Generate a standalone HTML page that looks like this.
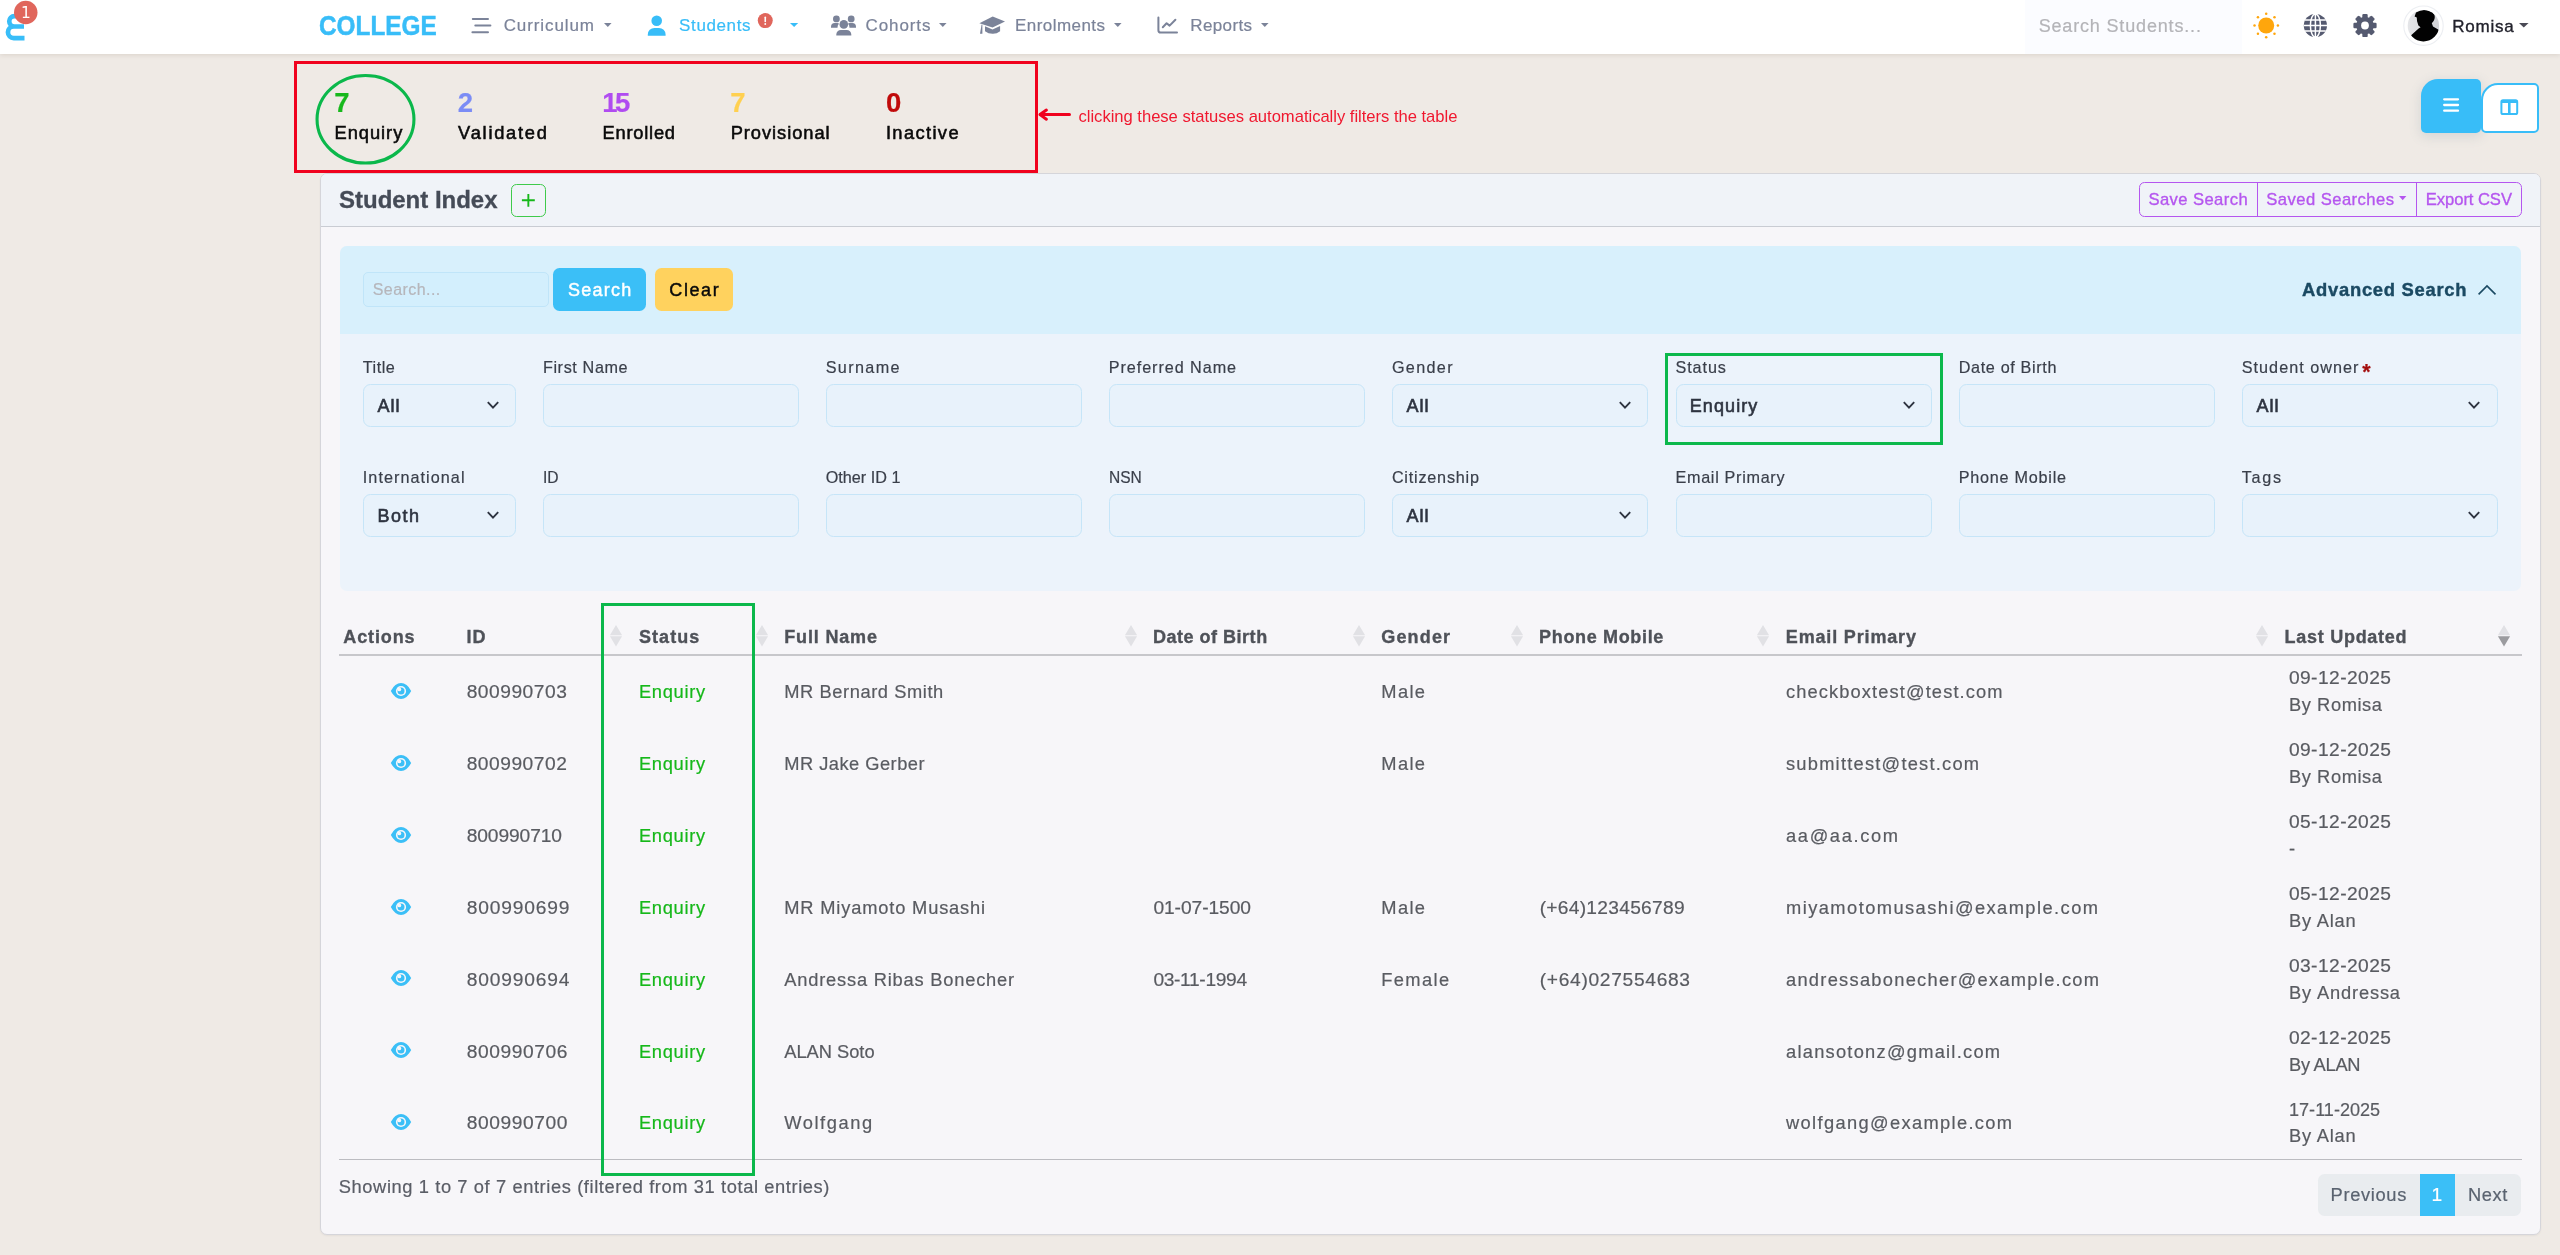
<!DOCTYPE html>
<html lang="en"><head><meta charset="utf-8"><title>Student Index</title>
<style>
html,body{margin:0;padding:0}
body{width:2560px;height:1255px;overflow:hidden;background:#efeae5;font-family:"Liberation Sans", sans-serif;position:relative}
#r{position:absolute;left:0;top:0;width:2560px;height:1255px;overflow:hidden;will-change:transform}
#r div,#r span,#r svg{position:absolute;box-sizing:border-box}
#r span{white-space:pre;display:block}
</style></head>
<body><div id="r">
<div style="left:0px;top:0px;width:2560px;height:54px;background:#fff;box-shadow:0 1px 5px rgba(110,90,70,.17)"></div>
<div style="left:2025px;top:0px;width:216.5px;height:54px;background:#fbfcff"></div>
<svg style="left:0px;top:0px" width="60" height="54" viewBox="0 0 60 54" ><path d="M21 16.1H14.45A5.2 5.2 0 0 0 14.45 26.5H24M14.45 26.5H13.75A5.8 5.8 0 0 0 13.75 38.1H24.5" fill="none" stroke="#38bdf8" stroke-width="4.7"/><circle cx="25.75" cy="12.5" r="11.75" fill="#e0665c"/><text x="25.9" y="18.1" font-family="DejaVu Sans, sans-serif" font-size="15.4" fill="#fff" text-anchor="middle">1</text></svg>
<svg style="left:465px;top:10px" width="34" height="34" viewBox="465 10 34 34" ><g stroke="#7b8399" stroke-width="2" stroke-linecap="round"><path d="M472.8 19H488M475.3 25.5H490.4M472.4 32.3H488"/></g></svg>
<svg style="left:602.75px;top:22px" width="9.6" height="6.1" viewBox="602.75 22 9.6 6.1" ><path d="M603.75 23h7.6l-3.8 4.1z" fill="#7b8399"/></svg>
<svg style="left:645px;top:12px" width="24" height="28" viewBox="645 12 24 28" ><g fill="#38bdf8"><circle cx="656.7" cy="20.7" r="5.3"/><path d="M647.8 35.7v-1.2a6.6 6.6 0 0 1 6.6-6.6h4.6a6.6 6.6 0 0 1 6.6 6.6v1.2z"/></g></svg>
<svg style="left:755px;top:10px" width="22" height="22" viewBox="755 10 22 22" ><circle cx="765.25" cy="20.6" r="7.5" fill="#e0665c"/><path d="M765.25 17.3v4.2" stroke="#fff" stroke-width="1.6" stroke-linecap="round"/><circle cx="765.25" cy="24" r="0.95" fill="#fff"/></svg>
<svg style="left:788.6px;top:22px" width="10.2" height="6.1" viewBox="788.6 22 10.2 6.1" ><path d="M789.6 23h8.2l-4.1 4.1z" fill="#38bdf8"/></svg>
<svg style="left:828px;top:12px" width="32" height="28" viewBox="828 12 32 28" ><g fill="#7b8399"><circle cx="836.4" cy="18.9" r="3.4"/><circle cx="851.2" cy="18.9" r="3.4"/><circle cx="843.8" cy="24.4" r="4.3"/><path d="M831 27.8v-1a3.8 3.8 0 0 1 3.8-3.8h2.6q1 0 1.6.6a6 6 0 0 0-1.5 4.2z"/><path d="M856 27.8v-1a3.8 3.8 0 0 0-3.8-3.8h-2.6q-1 0-1.6.6a6 6 0 0 1 1.5 4.2z"/><path d="M836.3 35.6v-1a4.6 4.6 0 0 1 4.6-4.6h5.8a4.6 4.6 0 0 1 4.6 4.6v1z"/></g></svg>
<svg style="left:937.6px;top:22px" width="9.6" height="6.1" viewBox="937.6 22 9.6 6.1" ><path d="M938.6 23h7.6l-3.8 4.1z" fill="#7b8399"/></svg>
<svg style="left:976px;top:12px" width="34" height="28" viewBox="976 12 34 28" ><g fill="#7b8399"><path d="M979.4 23.2L992.7 16.6L1005 21.6L992.5 27.4z"/><path d="M985 26.2l7.5 3.2l7.6-3.4v5.2q-3.5 2.8-7.6 2.6q-4.2 0-7.5-2.6z"/><path d="M981.6 24.4L980 33.8h2.4L982.4 24.8z"/></g></svg>
<svg style="left:1113px;top:22px" width="9.6" height="6.1" viewBox="1113 22 9.6 6.1" ><path d="M1114 23h7.6l-3.8 4.1z" fill="#7b8399"/></svg>
<svg style="left:1154px;top:12px" width="28" height="26" viewBox="1154 12 28 26" ><g fill="none" stroke="#7b8399" stroke-width="2" stroke-linecap="round" stroke-linejoin="round"><path d="M1158.4 17.6V30.2q0 2.4 2.4 2.4H1177"/><path d="M1162.8 27.2L1166.6 23.2L1169.6 25.6L1175.4 19.8"/></g></svg>
<svg style="left:1259.7px;top:22px" width="9.6" height="6.1" viewBox="1259.7 22 9.6 6.1" ><path d="M1260.7 23h7.6l-3.8 4.1z" fill="#7b8399"/></svg>
<svg style="left:2250px;top:9px" width="33" height="33" viewBox="2250 9 33 33" ><g fill="#ffa60c"><circle cx="2266.2" cy="25.5" r="8"/><circle cx="2277.90" cy="25.50" r="1.25"/><circle cx="2274.47" cy="33.77" r="1.25"/><circle cx="2266.20" cy="37.20" r="1.25"/><circle cx="2257.93" cy="33.77" r="1.25"/><circle cx="2254.50" cy="25.50" r="1.25"/><circle cx="2257.93" cy="17.23" r="1.25"/><circle cx="2266.20" cy="13.80" r="1.25"/><circle cx="2274.47" cy="17.23" r="1.25"/></g></svg>
<svg style="left:2300px;top:10px" width="31" height="31" viewBox="2300 10 31 31" ><circle cx="2315.4" cy="25.5" r="11.6" fill="#555a70"/><g fill="none" stroke="#fff" stroke-width="1.5"><ellipse cx="2315.4" cy="25.5" rx="5" ry="11.6"/><path d="M2315.4 13.9v23.2M2303.8 25.5h23.2M2305 20h20.8M2305 31h20.8"/></g></svg>
<svg style="left:2350px;top:10px" width="31" height="31" viewBox="2350 10 31 31" ><g fill="#555a70"><rect x="2362.3" y="13.9" width="5.4" height="23.2" rx="1.2" transform="rotate(0 2365 25.5)"/><rect x="2362.3" y="13.9" width="5.4" height="23.2" rx="1.2" transform="rotate(45 2365 25.5)"/><rect x="2362.3" y="13.9" width="5.4" height="23.2" rx="1.2" transform="rotate(90 2365 25.5)"/><rect x="2362.3" y="13.9" width="5.4" height="23.2" rx="1.2" transform="rotate(135 2365 25.5)"/><circle cx="2365" cy="25.5" r="8.8"/></g><circle cx="2365" cy="25.5" r="3.9" fill="#fff"/></svg>
<svg style="left:2400px;top:3px" width="46" height="46" viewBox="2400 3 46 46" ><circle cx="2423.5" cy="25.7" r="19.7" fill="#fff" stroke="#eceef2" stroke-width="1.1"/><clipPath id="av"><circle cx="2423.4" cy="25.7" r="15.7"/></clipPath><linearGradient id="avg" x1="0" x2="1" y1="0" y2="0"><stop offset="0" stop-color="#e6e7ea"/><stop offset="1" stop-color="#cfd0d3"/></linearGradient><g clip-path="url(#av)"><rect x="2405" y="8" width="38" height="36" fill="url(#avg)"/><path d="M2416 12.6Q2424 7.6 2432.6 12.4Q2436.4 16 2433.6 21L2431.8 23.2L2433 26.4L2438.6 29.8L2441 44H2407L2411.4 35L2418.6 28.6L2420.6 27.2L2418.4 25.4L2417 21L2416.8 17.4L2414.6 16.4Z" fill="#020202"/></g></svg>
<svg style="left:2518.2px;top:22.2px" width="11.6" height="6.6" viewBox="2518.2 22.2 11.6 6.6" ><path d="M2519.2 23.2h9.6l-4.8 4.6z" fill="#4a4a55"/></svg>
<div style="left:2420.8px;top:78.8px;width:60.4px;height:54px;background:#38bdf8;border-radius:17px 5px 5px 5px;box-shadow:0 3px 12px 1px rgba(80,110,130,.15)"></div>
<div style="left:2481px;top:83.1px;width:57.8px;height:49.6px;background:#fff;border:2.2px solid #38bdf8;border-radius:17px 5px 5px 5px"></div>
<svg style="left:2440px;top:95px" width="22" height="20" viewBox="2440 95 22 20" ><path d="M2444.2 99.3H2458M2444.2 105H2458M2444.2 110.7H2458" stroke="#fff" stroke-width="2.3" stroke-linecap="round"/></svg>
<svg style="left:2498px;top:97px" width="23" height="21" viewBox="2498 97 23 21" ><rect x="2501.4" y="100.3" width="15.8" height="13.8" rx="1.6" fill="none" stroke="#38bdf8" stroke-width="2"/><path d="M2501.4 101.6h15.8M2509.3 101v13" stroke="#38bdf8" stroke-width="2.6"/></svg>
<div style="left:319.9px;top:172.6px;width:2221px;height:1062.6px;background:#f7f6f9;border:1px solid #d5d5da;border-radius:7px;box-shadow:0 1px 2px rgba(0,0,0,.05)"></div>
<div style="left:320.9px;top:173.6px;width:2219px;height:53.4px;background:#f0f3f8;border-bottom:1px solid #c9ccd3;border-radius:6px 6px 0 0"></div>
<div style="left:511px;top:184px;width:35px;height:33.3px;border:1.4px solid #3fca4b;border-radius:5.5px"></div>
<svg style="left:518px;top:190px" width="22" height="22" viewBox="518 190 22 22" ><path d="M521.9 200.3H534.8M528.35 193.9V206.7" stroke="#16b81a" stroke-width="1.9"/></svg>
<div style="left:2139px;top:181.8px;width:383.2px;height:34.9px;border:1.1px solid #b556ef;border-radius:5.5px"></div>
<div style="left:2256.7px;top:181.8px;width:1.2px;height:34.9px;background:#b556ef"></div>
<div style="left:2416px;top:181.8px;width:1.2px;height:34.9px;background:#b556ef"></div>
<svg style="left:2398.3px;top:195px" width="9.4" height="6.2" viewBox="2398.3 195 9.4 6.2" ><path d="M2399.3 196h7.4l-3.7 4.2z" fill="#b556ef"/></svg>
<div style="left:340px;top:245.5px;width:2181px;height:345px;background:#ecf3fb;border-radius:7px;overflow:hidden"><div style="left:0;top:0;width:2181px;height:88px;background:#d8f0fc"></div></div>
<div style="left:363px;top:272.3px;width:185.8px;height:34.4px;background:#d3effd;border:1px solid #c0e5f9;border-radius:5px"></div>
<div style="left:553.4px;top:268.4px;width:92.6px;height:42.4px;background:#3bbff7;border-radius:6.5px"></div>
<div style="left:655.2px;top:268.4px;width:77.8px;height:42.4px;background:#ffd25e;border-radius:6.5px"></div>
<svg style="left:2475px;top:282px" width="24" height="16" viewBox="2475 282 24 16" ><path d="M2478.6 294.4L2487 285.9L2495.5 294.4" fill="none" stroke="#1b4a63" stroke-width="1.6"/></svg>
<div style="left:363px;top:384px;width:153.2px;height:42.6px;background:#e8f2fb;border:1.2px solid #c6e5f8;border-radius:7.5px"></div>
<svg style="left:483.80000000000007px;top:398.3px" width="18" height="14" viewBox="483.80000000000007 398.3 18 14" ><path d="M487.6000000000001 402.5L492.80000000000007 407.90000000000003L498.00000000000006 402.5" fill="none" stroke="#2e3440" stroke-width="1.9"/></svg>
<div style="left:543.1px;top:384px;width:256.3px;height:42.6px;background:#e8f2fb;border:1.2px solid #c6e5f8;border-radius:7.5px"></div>
<div style="left:826px;top:384px;width:256px;height:42.6px;background:#e8f2fb;border:1.2px solid #c6e5f8;border-radius:7.5px"></div>
<div style="left:1109px;top:384px;width:256px;height:42.6px;background:#e8f2fb;border:1.2px solid #c6e5f8;border-radius:7.5px"></div>
<div style="left:1392px;top:384px;width:256px;height:42.6px;background:#e8f2fb;border:1.2px solid #c6e5f8;border-radius:7.5px"></div>
<svg style="left:1615.6px;top:398.3px" width="18" height="14" viewBox="1615.6 398.3 18 14" ><path d="M1619.3999999999999 402.5L1624.6 407.90000000000003L1629.8 402.5" fill="none" stroke="#2e3440" stroke-width="1.9"/></svg>
<div style="left:1675.5px;top:384px;width:256.5px;height:42.6px;background:#e8f2fb;border:1.2px solid #c6e5f8;border-radius:7.5px"></div>
<svg style="left:1899.6px;top:398.3px" width="18" height="14" viewBox="1899.6 398.3 18 14" ><path d="M1903.3999999999999 402.5L1908.6 407.90000000000003L1913.8 402.5" fill="none" stroke="#2e3440" stroke-width="1.9"/></svg>
<div style="left:1959px;top:384px;width:255.5px;height:42.6px;background:#e8f2fb;border:1.2px solid #c6e5f8;border-radius:7.5px"></div>
<div style="left:2242px;top:384px;width:255.5px;height:42.6px;background:#e8f2fb;border:1.2px solid #c6e5f8;border-radius:7.5px"></div>
<svg style="left:2465.1px;top:398.3px" width="18" height="14" viewBox="2465.1 398.3 18 14" ><path d="M2468.9 402.5L2474.1 407.90000000000003L2479.2999999999997 402.5" fill="none" stroke="#2e3440" stroke-width="1.9"/></svg>
<div style="left:363px;top:494px;width:153.2px;height:42.6px;background:#e8f2fb;border:1.2px solid #c6e5f8;border-radius:7.5px"></div>
<svg style="left:483.80000000000007px;top:508.29999999999995px" width="18" height="14" viewBox="483.80000000000007 508.29999999999995 18 14" ><path d="M487.6000000000001 512.5L492.80000000000007 517.9L498.00000000000006 512.5" fill="none" stroke="#2e3440" stroke-width="1.9"/></svg>
<div style="left:543.1px;top:494px;width:256.3px;height:42.6px;background:#e8f2fb;border:1.2px solid #c6e5f8;border-radius:7.5px"></div>
<div style="left:826px;top:494px;width:256px;height:42.6px;background:#e8f2fb;border:1.2px solid #c6e5f8;border-radius:7.5px"></div>
<div style="left:1109px;top:494px;width:256px;height:42.6px;background:#e8f2fb;border:1.2px solid #c6e5f8;border-radius:7.5px"></div>
<div style="left:1392px;top:494px;width:256px;height:42.6px;background:#e8f2fb;border:1.2px solid #c6e5f8;border-radius:7.5px"></div>
<svg style="left:1615.6px;top:508.29999999999995px" width="18" height="14" viewBox="1615.6 508.29999999999995 18 14" ><path d="M1619.3999999999999 512.5L1624.6 517.9L1629.8 512.5" fill="none" stroke="#2e3440" stroke-width="1.9"/></svg>
<div style="left:1675.5px;top:494px;width:256.5px;height:42.6px;background:#e8f2fb;border:1.2px solid #c6e5f8;border-radius:7.5px"></div>
<div style="left:1959px;top:494px;width:255.5px;height:42.6px;background:#e8f2fb;border:1.2px solid #c6e5f8;border-radius:7.5px"></div>
<div style="left:2242px;top:494px;width:255.5px;height:42.6px;background:#e8f2fb;border:1.2px solid #c6e5f8;border-radius:7.5px"></div>
<svg style="left:2465.1px;top:508.29999999999995px" width="18" height="14" viewBox="2465.1 508.29999999999995 18 14" ><path d="M2468.9 512.5L2474.1 517.9L2479.2999999999997 512.5" fill="none" stroke="#2e3440" stroke-width="1.9"/></svg>
<div style="left:339.2px;top:654.1px;width:2182.8px;height:1.5px;background:#c7c7cb"></div>
<div style="left:339.2px;top:1158.6px;width:2182.8px;height:1.1px;background:#bcbcc1"></div>
<svg style="left:608.4px;top:623px" width="16" height="26" viewBox="608.4 623 16 26" ><path d="M616.4 625L622.5 635.2H610.3z" fill="#e1e1e5"/><path d="M610.3 636.2H622.5L616.4 646.5z" fill="#e1e1e5"/></svg>
<svg style="left:753.8px;top:623px" width="16" height="26" viewBox="753.8 623 16 26" ><path d="M761.8 625L767.9 635.2H755.6999999999999z" fill="#e1e1e5"/><path d="M755.6999999999999 636.2H767.9L761.8 646.5z" fill="#e1e1e5"/></svg>
<svg style="left:1122.5px;top:623px" width="16" height="26" viewBox="1122.5 623 16 26" ><path d="M1130.5 625L1136.6 635.2H1124.4z" fill="#e1e1e5"/><path d="M1124.4 636.2H1136.6L1130.5 646.5z" fill="#e1e1e5"/></svg>
<svg style="left:1351px;top:623px" width="16" height="26" viewBox="1351 623 16 26" ><path d="M1359 625L1365.1 635.2H1352.9z" fill="#e1e1e5"/><path d="M1352.9 636.2H1365.1L1359 646.5z" fill="#e1e1e5"/></svg>
<svg style="left:1508.7px;top:623px" width="16" height="26" viewBox="1508.7 623 16 26" ><path d="M1516.7 625L1522.8 635.2H1510.6000000000001z" fill="#e1e1e5"/><path d="M1510.6000000000001 636.2H1522.8L1516.7 646.5z" fill="#e1e1e5"/></svg>
<svg style="left:1755.2px;top:623px" width="16" height="26" viewBox="1755.2 623 16 26" ><path d="M1763.2 625L1769.3 635.2H1757.1000000000001z" fill="#e1e1e5"/><path d="M1757.1000000000001 636.2H1769.3L1763.2 646.5z" fill="#e1e1e5"/></svg>
<svg style="left:2254px;top:623px" width="16" height="26" viewBox="2254 623 16 26" ><path d="M2262 625L2268.1 635.2H2255.9z" fill="#e1e1e5"/><path d="M2255.9 636.2H2268.1L2262 646.5z" fill="#e1e1e5"/></svg>
<svg style="left:2495.5px;top:623px" width="16" height="26" viewBox="2495.5 623 16 26" ><path d="M2503.5 625L2509.6 635.2H2497.4z" fill="#e1e1e5"/><path d="M2497.4 636.2H2509.6L2503.5 646.5z" fill="#9b9b9f"/></svg>
<svg style="left:389px;top:680.8px" width="24" height="20" viewBox="0 0 24 20" ><path d="M1.8 10Q6 2.1 12 2.1Q18 2.1 22.2 10Q18 17.9 12 17.9Q6 17.9 1.8 10z" fill="#3bbff7"/><circle cx="12" cy="10" r="5.1" fill="#f7f6f9"/><circle cx="12" cy="10" r="3.5" fill="#3bbff7"/><circle cx="10.3" cy="8.4" r="1.9" fill="#f7f6f9"/></svg>
<svg style="left:389px;top:752.7199999999999px" width="24" height="20" viewBox="0 0 24 20" ><path d="M1.8 10Q6 2.1 12 2.1Q18 2.1 22.2 10Q18 17.9 12 17.9Q6 17.9 1.8 10z" fill="#3bbff7"/><circle cx="12" cy="10" r="5.1" fill="#f7f6f9"/><circle cx="12" cy="10" r="3.5" fill="#3bbff7"/><circle cx="10.3" cy="8.4" r="1.9" fill="#f7f6f9"/></svg>
<svg style="left:389px;top:824.64px" width="24" height="20" viewBox="0 0 24 20" ><path d="M1.8 10Q6 2.1 12 2.1Q18 2.1 22.2 10Q18 17.9 12 17.9Q6 17.9 1.8 10z" fill="#3bbff7"/><circle cx="12" cy="10" r="5.1" fill="#f7f6f9"/><circle cx="12" cy="10" r="3.5" fill="#3bbff7"/><circle cx="10.3" cy="8.4" r="1.9" fill="#f7f6f9"/></svg>
<svg style="left:389px;top:896.56px" width="24" height="20" viewBox="0 0 24 20" ><path d="M1.8 10Q6 2.1 12 2.1Q18 2.1 22.2 10Q18 17.9 12 17.9Q6 17.9 1.8 10z" fill="#3bbff7"/><circle cx="12" cy="10" r="5.1" fill="#f7f6f9"/><circle cx="12" cy="10" r="3.5" fill="#3bbff7"/><circle cx="10.3" cy="8.4" r="1.9" fill="#f7f6f9"/></svg>
<svg style="left:389px;top:968.48px" width="24" height="20" viewBox="0 0 24 20" ><path d="M1.8 10Q6 2.1 12 2.1Q18 2.1 22.2 10Q18 17.9 12 17.9Q6 17.9 1.8 10z" fill="#3bbff7"/><circle cx="12" cy="10" r="5.1" fill="#f7f6f9"/><circle cx="12" cy="10" r="3.5" fill="#3bbff7"/><circle cx="10.3" cy="8.4" r="1.9" fill="#f7f6f9"/></svg>
<svg style="left:389px;top:1040.4px" width="24" height="20" viewBox="0 0 24 20" ><path d="M1.8 10Q6 2.1 12 2.1Q18 2.1 22.2 10Q18 17.9 12 17.9Q6 17.9 1.8 10z" fill="#3bbff7"/><circle cx="12" cy="10" r="5.1" fill="#f7f6f9"/><circle cx="12" cy="10" r="3.5" fill="#3bbff7"/><circle cx="10.3" cy="8.4" r="1.9" fill="#f7f6f9"/></svg>
<svg style="left:389px;top:1112.32px" width="24" height="20" viewBox="0 0 24 20" ><path d="M1.8 10Q6 2.1 12 2.1Q18 2.1 22.2 10Q18 17.9 12 17.9Q6 17.9 1.8 10z" fill="#3bbff7"/><circle cx="12" cy="10" r="5.1" fill="#f7f6f9"/><circle cx="12" cy="10" r="3.5" fill="#3bbff7"/><circle cx="10.3" cy="8.4" r="1.9" fill="#f7f6f9"/></svg>
<div style="left:2317.5px;top:1173.8px;width:203.8px;height:42px;background:#e9ecef;border-radius:6.5px"></div>
<div style="left:2419.5px;top:1173.8px;width:35.5px;height:42px;background:#3bbff7"></div>
<span style="left:318.7px;top:9.0px;font-size:27.2px;line-height:33px;color:#38bdf8;transform:scaleX(0.8956);transform-origin:0 0;font-weight:700;-webkit-text-stroke:0.5px #38bdf8;">COLLEGE</span>
<span style="left:503.7px;top:16.0px;font-size:17px;line-height:20px;color:#7b8399;letter-spacing:0.9px;-webkit-text-stroke:0.2px #7b8399;">Curriculum</span>
<span style="left:679.1px;top:16.0px;font-size:17px;line-height:20px;color:#38bdf8;letter-spacing:0.61px;-webkit-text-stroke:0.2px #38bdf8;">Students</span>
<span style="left:865.6px;top:16.0px;font-size:17px;line-height:20px;color:#7b8399;letter-spacing:0.89px;-webkit-text-stroke:0.2px #7b8399;">Cohorts</span>
<span style="left:1015.0px;top:16.0px;font-size:17px;line-height:20px;color:#7b8399;letter-spacing:0.45px;-webkit-text-stroke:0.2px #7b8399;">Enrolments</span>
<span style="left:1190.3px;top:16.0px;font-size:17px;line-height:20px;color:#7b8399;letter-spacing:0.36px;-webkit-text-stroke:0.2px #7b8399;">Reports</span>
<span style="left:2038.7px;top:15.0px;font-size:18px;line-height:22px;color:#b4b4b8;letter-spacing:0.83px;-webkit-text-stroke:0.2px #b4b4b8;">Search Students...</span>
<span style="left:2452.3px;top:17.0px;font-size:17px;line-height:20px;color:#22222c;letter-spacing:0.77px;-webkit-text-stroke:0.35px #22222c;">Romisa</span>
<span style="left:334.2px;top:86.0px;font-size:27.5px;line-height:33px;color:#17b81c;font-weight:700;-webkit-text-stroke:0.2px #17b81c;">7</span>
<span style="left:457.7px;top:86.0px;font-size:27.5px;line-height:33px;color:#7b8cf5;font-weight:700;-webkit-text-stroke:0.2px #7b8cf5;">2</span>
<span style="left:602.2px;top:86.0px;font-size:27.5px;line-height:33px;color:#b04cf0;letter-spacing:-2.6px;font-weight:700;-webkit-text-stroke:0.2px #b04cf0;">15</span>
<span style="left:730.3px;top:86.0px;font-size:27.5px;line-height:33px;color:#ffd050;font-weight:700;-webkit-text-stroke:0.2px #ffd050;">7</span>
<span style="left:886.1px;top:86.0px;font-size:27.5px;line-height:33px;color:#c00a0a;font-weight:700;-webkit-text-stroke:0.2px #c00a0a;">0</span>
<span style="left:334.6px;top:122.0px;font-size:18.3px;line-height:22px;color:#0a0a0a;letter-spacing:0.95px;-webkit-text-stroke:0.55px #0a0a0a;">Enquiry</span>
<span style="left:458.1px;top:122.0px;font-size:18.3px;line-height:22px;color:#0a0a0a;letter-spacing:1.74px;-webkit-text-stroke:0.55px #0a0a0a;">Validated</span>
<span style="left:602.6px;top:122.0px;font-size:18.3px;line-height:22px;color:#0a0a0a;letter-spacing:0.76px;-webkit-text-stroke:0.55px #0a0a0a;">Enrolled</span>
<span style="left:730.7px;top:122.0px;font-size:18.3px;line-height:22px;color:#0a0a0a;letter-spacing:0.95px;-webkit-text-stroke:0.55px #0a0a0a;">Provisional</span>
<span style="left:885.9px;top:122.0px;font-size:18.3px;line-height:22px;color:#0a0a0a;letter-spacing:1.38px;-webkit-text-stroke:0.55px #0a0a0a;">Inactive</span>
<span style="left:1078.5px;top:107.0px;font-size:16.6px;line-height:20px;color:#f0182f;letter-spacing:-0.02px;">clicking these statuses automatically filters the table</span>
<span style="left:339.0px;top:185.0px;font-size:24px;line-height:29px;color:#454b57;letter-spacing:-0.01px;font-weight:700;-webkit-text-stroke:0.3px #454b57;">Student Index</span>
<span style="left:2148.5px;top:190.0px;font-size:16.6px;line-height:20px;color:#b556ef;letter-spacing:0.41px;-webkit-text-stroke:0.35px #b556ef;">Save Search</span>
<span style="left:2266.3px;top:190.0px;font-size:16.6px;line-height:20px;color:#b556ef;letter-spacing:0.46px;-webkit-text-stroke:0.35px #b556ef;">Saved Searches</span>
<span style="left:2425.8px;top:190.0px;font-size:16.6px;line-height:20px;color:#b556ef;letter-spacing:-0.06px;-webkit-text-stroke:0.35px #b556ef;">Export CSV</span>
<span style="left:372.7px;top:280.0px;font-size:16px;line-height:19px;color:#b6b6bb;letter-spacing:0.44px;-webkit-text-stroke:0.2px #b6b6bb;">Search...</span>
<span style="left:567.9px;top:279.0px;font-size:18px;line-height:22px;color:#fff;letter-spacing:1.28px;-webkit-text-stroke:0.45px #fff;">Search</span>
<span style="left:669.3px;top:279.0px;font-size:18px;line-height:22px;color:#0a0a0a;letter-spacing:1.59px;-webkit-text-stroke:0.45px #0a0a0a;">Clear</span>
<span style="left:2302.1px;top:279.0px;font-size:18.4px;line-height:22px;color:#1b4a63;letter-spacing:0.72px;font-weight:700;-webkit-text-stroke:0.4px #1b4a63;">Advanced Search</span>
<span style="left:362.8px;top:358.0px;font-size:16.2px;line-height:19px;color:#3a3f4a;letter-spacing:0.51px;-webkit-text-stroke:0.2px #3a3f4a;">Title</span>
<span style="left:542.9px;top:358.0px;font-size:16.2px;line-height:19px;color:#3a3f4a;letter-spacing:0.62px;-webkit-text-stroke:0.2px #3a3f4a;">First Name</span>
<span style="left:825.7px;top:358.0px;font-size:16.2px;line-height:19px;color:#3a3f4a;letter-spacing:1.36px;-webkit-text-stroke:0.2px #3a3f4a;">Surname</span>
<span style="left:1108.7px;top:358.0px;font-size:16.2px;line-height:19px;color:#3a3f4a;letter-spacing:0.94px;-webkit-text-stroke:0.2px #3a3f4a;">Preferred Name</span>
<span style="left:1391.9px;top:358.0px;font-size:16.2px;line-height:19px;color:#3a3f4a;letter-spacing:1.33px;-webkit-text-stroke:0.2px #3a3f4a;">Gender</span>
<span style="left:1675.5px;top:358.0px;font-size:16.2px;line-height:19px;color:#3a3f4a;letter-spacing:0.91px;-webkit-text-stroke:0.2px #3a3f4a;">Status</span>
<span style="left:1958.7px;top:358.0px;font-size:16.2px;line-height:19px;color:#3a3f4a;letter-spacing:0.65px;-webkit-text-stroke:0.2px #3a3f4a;">Date of Birth</span>
<span style="left:2241.8px;top:358.0px;font-size:16.2px;line-height:19px;color:#3a3f4a;letter-spacing:1.01px;-webkit-text-stroke:0.2px #3a3f4a;">Student owner</span>
<span style="left:2362.3px;top:359.0px;font-size:21.5px;line-height:26px;color:#a30d0d;font-weight:700;-webkit-text-stroke:0.2px #a30d0d;">*</span>
<span style="left:362.8px;top:468.0px;font-size:16.2px;line-height:19px;color:#3a3f4a;letter-spacing:1.05px;-webkit-text-stroke:0.2px #3a3f4a;">International</span>
<span style="left:542.9px;top:468.0px;font-size:16.2px;line-height:19px;color:#3a3f4a;transform:scaleX(0.9658);transform-origin:0 0;-webkit-text-stroke:0.2px #3a3f4a;">ID</span>
<span style="left:825.7px;top:468.0px;font-size:16.2px;line-height:19px;color:#3a3f4a;letter-spacing:0.02px;-webkit-text-stroke:0.2px #3a3f4a;">Other ID 1</span>
<span style="left:1108.7px;top:468.0px;font-size:16.2px;line-height:19px;color:#3a3f4a;transform:scaleX(0.9604);transform-origin:0 0;-webkit-text-stroke:0.2px #3a3f4a;">NSN</span>
<span style="left:1391.9px;top:468.0px;font-size:16.2px;line-height:19px;color:#3a3f4a;letter-spacing:0.79px;-webkit-text-stroke:0.2px #3a3f4a;">Citizenship</span>
<span style="left:1675.5px;top:468.0px;font-size:16.2px;line-height:19px;color:#3a3f4a;letter-spacing:0.69px;-webkit-text-stroke:0.2px #3a3f4a;">Email Primary</span>
<span style="left:1958.7px;top:468.0px;font-size:16.2px;line-height:19px;color:#3a3f4a;letter-spacing:0.76px;-webkit-text-stroke:0.2px #3a3f4a;">Phone Mobile</span>
<span style="left:2241.8px;top:468.0px;font-size:16.2px;line-height:19px;color:#3a3f4a;letter-spacing:1.68px;-webkit-text-stroke:0.2px #3a3f4a;">Tags</span>
<span style="left:377.4px;top:395.0px;font-size:18px;line-height:22px;color:#2e3440;letter-spacing:1.07px;-webkit-text-stroke:0.6px #2e3440;">All</span>
<span style="left:1406.4px;top:395.0px;font-size:18px;line-height:22px;color:#2e3440;letter-spacing:1.07px;-webkit-text-stroke:0.6px #2e3440;">All</span>
<span style="left:1689.7px;top:395.0px;font-size:18px;line-height:22px;color:#2e3440;letter-spacing:1.1px;-webkit-text-stroke:0.6px #2e3440;">Enquiry</span>
<span style="left:2256.4px;top:395.0px;font-size:18px;line-height:22px;color:#2e3440;letter-spacing:1.07px;-webkit-text-stroke:0.6px #2e3440;">All</span>
<span style="left:377.4px;top:505.0px;font-size:18px;line-height:22px;color:#2e3440;letter-spacing:1.54px;-webkit-text-stroke:0.6px #2e3440;">Both</span>
<span style="left:1406.4px;top:505.0px;font-size:18px;line-height:22px;color:#2e3440;letter-spacing:1.07px;-webkit-text-stroke:0.6px #2e3440;">All</span>
<span style="left:343.3px;top:626.0px;font-size:18px;line-height:22px;color:#4f5259;letter-spacing:0.87px;font-weight:700;-webkit-text-stroke:0.35px #4f5259;">Actions</span>
<span style="left:466.6px;top:626.0px;font-size:18px;line-height:22px;color:#4f5259;letter-spacing:0.86px;font-weight:700;-webkit-text-stroke:0.35px #4f5259;">ID</span>
<span style="left:638.9px;top:626.0px;font-size:18px;line-height:22px;color:#4f5259;letter-spacing:1.09px;font-weight:700;-webkit-text-stroke:0.35px #4f5259;">Status</span>
<span style="left:784.3px;top:626.0px;font-size:18px;line-height:22px;color:#4f5259;letter-spacing:0.83px;font-weight:700;-webkit-text-stroke:0.35px #4f5259;">Full Name</span>
<span style="left:1152.9px;top:626.0px;font-size:18px;line-height:22px;color:#4f5259;letter-spacing:0.52px;font-weight:700;-webkit-text-stroke:0.35px #4f5259;">Date of Birth</span>
<span style="left:1381.3px;top:626.0px;font-size:18px;line-height:22px;color:#4f5259;letter-spacing:1.15px;font-weight:700;-webkit-text-stroke:0.35px #4f5259;">Gender</span>
<span style="left:1539.1px;top:626.0px;font-size:18px;line-height:22px;color:#4f5259;letter-spacing:0.66px;font-weight:700;-webkit-text-stroke:0.35px #4f5259;">Phone Mobile</span>
<span style="left:1785.8px;top:626.0px;font-size:18px;line-height:22px;color:#4f5259;letter-spacing:0.84px;font-weight:700;-webkit-text-stroke:0.35px #4f5259;">Email Primary</span>
<span style="left:2284.6px;top:626.0px;font-size:18px;line-height:22px;color:#4f5259;letter-spacing:0.72px;font-weight:700;-webkit-text-stroke:0.35px #4f5259;">Last Updated</span>
<span style="left:466.7px;top:680.0px;font-size:19.2px;line-height:23px;color:#595b61;letter-spacing:0.51px;-webkit-text-stroke:0.2px #595b61;">800990703</span>
<span style="left:638.9px;top:681.0px;font-size:18.3px;line-height:22px;color:#16b81a;letter-spacing:0.71px;-webkit-text-stroke:0.2px #16b81a;">Enquiry</span>
<span style="left:784.3px;top:681.0px;font-size:18.3px;line-height:22px;color:#595b61;letter-spacing:0.57px;-webkit-text-stroke:0.2px #595b61;">MR Bernard Smith</span>
<span style="left:1381.3px;top:681.0px;font-size:18.3px;line-height:22px;color:#595b61;letter-spacing:1.35px;-webkit-text-stroke:0.2px #595b61;">Male</span>
<span style="left:1786.0px;top:681.0px;font-size:18.3px;line-height:22px;color:#595b61;letter-spacing:1.11px;-webkit-text-stroke:0.2px #595b61;">checkboxtest@test.com</span>
<span style="left:2288.9px;top:666.0px;font-size:19.2px;line-height:23px;color:#595b61;letter-spacing:0.44px;-webkit-text-stroke:0.2px #595b61;">09-12-2025</span>
<span style="left:2289.0px;top:694.0px;font-size:18.3px;line-height:22px;color:#595b61;letter-spacing:0.57px;-webkit-text-stroke:0.2px #595b61;">By Romisa</span>
<span style="left:466.7px;top:752.0px;font-size:19.2px;line-height:23px;color:#595b61;letter-spacing:0.51px;-webkit-text-stroke:0.2px #595b61;">800990702</span>
<span style="left:638.9px;top:753.0px;font-size:18.3px;line-height:22px;color:#16b81a;letter-spacing:0.71px;-webkit-text-stroke:0.2px #16b81a;">Enquiry</span>
<span style="left:784.3px;top:753.0px;font-size:18.3px;line-height:22px;color:#595b61;letter-spacing:0.47px;-webkit-text-stroke:0.2px #595b61;">MR Jake Gerber</span>
<span style="left:1381.3px;top:753.0px;font-size:18.3px;line-height:22px;color:#595b61;letter-spacing:1.35px;-webkit-text-stroke:0.2px #595b61;">Male</span>
<span style="left:1786.0px;top:753.0px;font-size:18.3px;line-height:22px;color:#595b61;letter-spacing:1.23px;-webkit-text-stroke:0.2px #595b61;">submittest@test.com</span>
<span style="left:2288.9px;top:738.0px;font-size:19.2px;line-height:23px;color:#595b61;letter-spacing:0.44px;-webkit-text-stroke:0.2px #595b61;">09-12-2025</span>
<span style="left:2289.0px;top:766.0px;font-size:18.3px;line-height:22px;color:#595b61;letter-spacing:0.57px;-webkit-text-stroke:0.2px #595b61;">By Romisa</span>
<span style="left:466.7px;top:824.0px;font-size:19.2px;line-height:23px;color:#595b61;letter-spacing:-0.09px;-webkit-text-stroke:0.2px #595b61;">800990710</span>
<span style="left:638.9px;top:825.0px;font-size:18.3px;line-height:22px;color:#16b81a;letter-spacing:0.71px;-webkit-text-stroke:0.2px #16b81a;">Enquiry</span>
<span style="left:1786.0px;top:825.0px;font-size:18.3px;line-height:22px;color:#595b61;letter-spacing:1.65px;-webkit-text-stroke:0.2px #595b61;">aa@aa.com</span>
<span style="left:2288.9px;top:810.0px;font-size:19.2px;line-height:23px;color:#595b61;letter-spacing:0.44px;-webkit-text-stroke:0.2px #595b61;">05-12-2025</span>
<span style="left:2289.0px;top:838.0px;font-size:18.3px;line-height:22px;color:#595b61;letter-spacing:0.5px;-webkit-text-stroke:0.2px #595b61;">-</span>
<span style="left:466.7px;top:896.0px;font-size:19.2px;line-height:23px;color:#595b61;letter-spacing:0.85px;-webkit-text-stroke:0.2px #595b61;">800990699</span>
<span style="left:638.9px;top:897.0px;font-size:18.3px;line-height:22px;color:#16b81a;letter-spacing:0.71px;-webkit-text-stroke:0.2px #16b81a;">Enquiry</span>
<span style="left:784.3px;top:897.0px;font-size:18.3px;line-height:22px;color:#595b61;letter-spacing:0.83px;-webkit-text-stroke:0.2px #595b61;">MR Miyamoto Musashi</span>
<span style="left:1153.4px;top:896.0px;font-size:19.2px;line-height:23px;color:#595b61;letter-spacing:-0.06px;-webkit-text-stroke:0.2px #595b61;">01-07-1500</span>
<span style="left:1381.3px;top:897.0px;font-size:18.3px;line-height:22px;color:#595b61;letter-spacing:1.35px;-webkit-text-stroke:0.2px #595b61;">Male</span>
<span style="left:1539.7px;top:896.0px;font-size:19.2px;line-height:23px;color:#595b61;letter-spacing:0.27px;-webkit-text-stroke:0.2px #595b61;">(+64)123456789</span>
<span style="left:1786.0px;top:897.0px;font-size:18.3px;line-height:22px;color:#595b61;letter-spacing:1.44px;-webkit-text-stroke:0.2px #595b61;">miyamotomusashi@example.com</span>
<span style="left:2288.9px;top:882.0px;font-size:19.2px;line-height:23px;color:#595b61;letter-spacing:0.44px;-webkit-text-stroke:0.2px #595b61;">05-12-2025</span>
<span style="left:2289.0px;top:910.0px;font-size:18.3px;line-height:22px;color:#595b61;letter-spacing:0.76px;-webkit-text-stroke:0.2px #595b61;">By Alan</span>
<span style="left:466.7px;top:968.0px;font-size:19.2px;line-height:23px;color:#595b61;letter-spacing:0.85px;-webkit-text-stroke:0.2px #595b61;">800990694</span>
<span style="left:638.9px;top:969.0px;font-size:18.3px;line-height:22px;color:#16b81a;letter-spacing:0.71px;-webkit-text-stroke:0.2px #16b81a;">Enquiry</span>
<span style="left:784.3px;top:969.0px;font-size:18.3px;line-height:22px;color:#595b61;letter-spacing:0.79px;-webkit-text-stroke:0.2px #595b61;">Andressa Ribas Bonecher</span>
<span style="left:1153.4px;top:968.0px;font-size:19.2px;line-height:23px;color:#595b61;letter-spacing:-0.34px;-webkit-text-stroke:0.2px #595b61;">03-11-1994</span>
<span style="left:1381.3px;top:969.0px;font-size:18.3px;line-height:22px;color:#595b61;letter-spacing:1.36px;-webkit-text-stroke:0.2px #595b61;">Female</span>
<span style="left:1539.7px;top:968.0px;font-size:19.2px;line-height:23px;color:#595b61;letter-spacing:0.69px;-webkit-text-stroke:0.2px #595b61;">(+64)027554683</span>
<span style="left:1786.0px;top:969.0px;font-size:18.3px;line-height:22px;color:#595b61;letter-spacing:1.27px;-webkit-text-stroke:0.2px #595b61;">andressabonecher@example.com</span>
<span style="left:2288.9px;top:954.0px;font-size:19.2px;line-height:23px;color:#595b61;letter-spacing:0.44px;-webkit-text-stroke:0.2px #595b61;">03-12-2025</span>
<span style="left:2289.0px;top:982.0px;font-size:18.3px;line-height:22px;color:#595b61;letter-spacing:0.84px;-webkit-text-stroke:0.2px #595b61;">By Andressa</span>
<span style="left:466.7px;top:1040.0px;font-size:19.2px;line-height:23px;color:#595b61;letter-spacing:0.6px;-webkit-text-stroke:0.2px #595b61;">800990706</span>
<span style="left:638.9px;top:1041.0px;font-size:18.3px;line-height:22px;color:#16b81a;letter-spacing:0.71px;-webkit-text-stroke:0.2px #16b81a;">Enquiry</span>
<span style="left:784.3px;top:1041.0px;font-size:18.3px;line-height:22px;color:#595b61;letter-spacing:-0.02px;-webkit-text-stroke:0.2px #595b61;">ALAN Soto</span>
<span style="left:1786.0px;top:1041.0px;font-size:18.3px;line-height:22px;color:#595b61;letter-spacing:1.25px;-webkit-text-stroke:0.2px #595b61;">alansotonz@gmail.com</span>
<span style="left:2288.9px;top:1026.0px;font-size:19.2px;line-height:23px;color:#595b61;letter-spacing:0.44px;-webkit-text-stroke:0.2px #595b61;">02-12-2025</span>
<span style="left:2289.0px;top:1054.0px;font-size:18.3px;line-height:22px;color:#595b61;letter-spacing:-0.27px;-webkit-text-stroke:0.2px #595b61;">By ALAN</span>
<span style="left:466.7px;top:1111.0px;font-size:19.2px;line-height:23px;color:#595b61;letter-spacing:0.6px;-webkit-text-stroke:0.2px #595b61;">800990700</span>
<span style="left:638.9px;top:1112.0px;font-size:18.3px;line-height:22px;color:#16b81a;letter-spacing:0.71px;-webkit-text-stroke:0.2px #16b81a;">Enquiry</span>
<span style="left:784.3px;top:1112.0px;font-size:18.3px;line-height:22px;color:#595b61;letter-spacing:1.55px;-webkit-text-stroke:0.2px #595b61;">Wolfgang</span>
<span style="left:1786.0px;top:1112.0px;font-size:18.3px;line-height:22px;color:#595b61;letter-spacing:1.35px;-webkit-text-stroke:0.2px #595b61;">wolfgang@example.com</span>
<span style="left:2288.9px;top:1098.0px;font-size:19.2px;line-height:23px;color:#595b61;transform:scaleX(0.9422);transform-origin:0 0;-webkit-text-stroke:0.2px #595b61;">17-11-2025</span>
<span style="left:2289.0px;top:1125.0px;font-size:18.3px;line-height:22px;color:#595b61;letter-spacing:0.76px;-webkit-text-stroke:0.2px #595b61;">By Alan</span>
<span style="left:338.8px;top:1176.0px;font-size:18.3px;line-height:22px;color:#5a5d66;letter-spacing:0.6px;-webkit-text-stroke:0.2px #5a5d66;">Showing 1 to 7 of 7 entries (filtered from 31 total entries)</span>
<span style="left:2330.6px;top:1184.0px;font-size:18.3px;line-height:22px;color:#5a6370;letter-spacing:0.66px;-webkit-text-stroke:0.2px #5a6370;">Previous</span>
<span style="left:2431.4px;top:1183.0px;font-size:19.2px;line-height:23px;color:#fff;-webkit-text-stroke:0.2px #fff;">1</span>
<span style="left:2468.1px;top:1184.0px;font-size:18.3px;line-height:22px;color:#5a6370;letter-spacing:0.56px;-webkit-text-stroke:0.2px #5a6370;">Next</span>
<div style="left:294px;top:60.7px;width:744.1px;height:112.5px;border:3.5px solid #f0021e"></div>
<svg style="left:310px;top:68px" width="112" height="104" viewBox="310 68 112 104" ><ellipse cx="365.5" cy="119.3" rx="48.45" ry="43.75" fill="none" stroke="#0bb84b" stroke-width="3.1"/></svg>
<svg style="left:1036px;top:104px" width="40" height="22" viewBox="1036 104 40 22" ><g fill="none" stroke="#f0021e" stroke-width="3" stroke-linecap="round" stroke-linejoin="round"><path d="M1040.5 114.6H1069.5"/><path d="M1046.4 110.1L1040 114.6L1046.4 119.2"/></g></svg>
<div style="left:1665.4px;top:352.7px;width:277.7px;height:92.2px;border:3.4px solid #0bb84b"></div>
<div style="left:601.1px;top:603.2px;width:154.1px;height:573.2px;border:3.5px solid #0bb84b"></div>
</div></body></html>
